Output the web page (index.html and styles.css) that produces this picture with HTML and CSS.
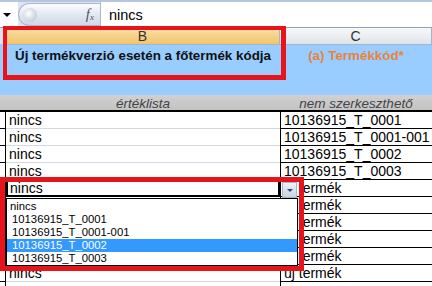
FILE: index.html
```html
<!DOCTYPE html>
<html lang="hu">
  <head>
    <meta charset="UTF-8" />
    <title>Termékkód</title>
    <link rel="stylesheet" href="styles.css">
  </head>
  <body>
    <div class="frame">
      <!-- Formula bar -->
      <div class="formula-bar">
        <div class="name-box"><span class="caret"></span></div>
        <div class="fx-pill"><span class="knob"></span><span class="fx">f<sub>x</sub></span></div>
        <div class="formula-input">nincs</div>
      </div>

      <!-- Sheet -->
      <div class="sheet">
        <div class="row col-heads">
          <div class="rh"></div>
          <div class="ch ch-sel">B</div>
          <div class="ch">C</div>
        </div>
        <div class="row title-row">
          <div class="rh blue"></div>
          <div class="title">Új termékverzió esetén a főtermék kódja</div>
          <div class="title orange">(a) Termékkód*</div>
        </div>
        <div class="row hint-row">
          <div class="rh gray"></div>
          <div class="hint">értéklista</div>
          <div class="hint">nem szerkeszthető</div>
        </div>
        <div class="data">
          <div class="row"><div class="rh"></div><div class="cb">nincs</div><div class="cc">10136915_T_0001</div></div>
          <div class="row"><div class="rh"></div><div class="cb">nincs</div><div class="cc">10136915_T_0001-001</div></div>
          <div class="row"><div class="rh"></div><div class="cb">nincs</div><div class="cc">10136915_T_0002</div></div>
          <div class="row"><div class="rh"></div><div class="cb">nincs</div><div class="cc">10136915_T_0003</div></div>
          <div class="row"><div class="rh"></div><div class="cb active">nincs</div><div class="cc">új termék</div></div>
          <div class="row"><div class="rh"></div><div class="cb"></div><div class="cc">új termék</div></div>
          <div class="row"><div class="rh"></div><div class="cb"></div><div class="cc">új termék</div></div>
          <div class="row"><div class="rh"></div><div class="cb"></div><div class="cc">új termék</div></div>
          <div class="row"><div class="rh"></div><div class="cb"></div><div class="cc">új termék</div></div>
          <div class="row"><div class="rh"></div><div class="cb">nincs</div><div class="cc">új termék</div></div>
          <div class="row"><div class="rh"></div><div class="cb"></div><div class="cc"></div></div>
        </div>
      </div>

      <!-- Validation dropdown -->
      <div class="dd-btn"><span class="dd-caret"></span></div>
      <ul class="dd-list">
        <li>nincs</li>
        <li>10136915_T_0001</li>
        <li>10136915_T_0001-001</li>
        <li class="sel">10136915_T_0002</li>
        <li>10136915_T_0003</li>
      </ul>

      <!-- Highlight boxes -->
      <div class="mark mark-head"></div>
      <div class="mark mark-list"></div>
    </div>
  </body>
</html>
```

FILE: styles.css
```css
/* ---------- Base ---------- */
*{box-sizing:border-box;margin:0;padding:0;}
html,body{width:432px;height:286px;overflow:hidden;background:#fff;}
body{font-family:"Liberation Sans",Arial,sans-serif;font-size:14px;color:#000;}
.frame{position:relative;width:432px;height:286px;overflow:hidden;}

/* ---------- Formula bar ---------- */
.formula-bar{display:flex;height:28px;background:#dbe5f3;border-top:2px solid #b6c6dc;border-bottom:1px solid #8da3c1;}
.name-box{flex:none;width:18px;display:flex;align-items:center;justify-content:center;background:#fff;}
.caret{width:0;height:0;border-left:4px solid transparent;border-right:4px solid transparent;border-top:4px solid #000;margin-left:-4px;}
.fx-pill{flex:none;width:82px;display:flex;align-items:center;justify-content:space-between;padding:0 6px 0 4px;margin:1px 0;border-radius:13px 0 0 13px;background:linear-gradient(#fbfcfe,#dde5f0 60%,#cfd9e6);border:1px solid #a9b8cc;border-right:none;}
.knob{width:14px;height:14px;border-radius:50%;background:radial-gradient(circle at 40% 40%,#fff,#c6cfdb 70%);}
.fx{font-family:"Liberation Serif",serif;font-style:italic;font-size:15px;color:#555;}
.fx sub{font-size:9px;vertical-align:-1px;}
.formula-input{flex:1;display:flex;align-items:center;padding-left:8px;background:#fff;border-left:1px solid #a9b8cc;font-size:14.5px;}

/* ---------- Sheet grid ---------- */
.row{display:grid;grid-template-columns:6px 274px 152px;}
.rh{background:#fff;border-right:1px solid #000;border-bottom:1px solid #000;}
.col-heads{height:16px;}
.col-heads .rh{background:#dde4ee;border-color:#9eb6ce;}
.ch{display:flex;align-items:center;justify-content:center;background:linear-gradient(#f7f8fa,#dfe4ea);border-right:1px solid #9eb6ce;border-bottom:1px solid #9eb6ce;color:#333;font-size:14px;}
.ch-sel{background:linear-gradient(#fbe0a8,#f3c36a);}
.title-row{height:51px;background:#99ccff;}
.title-row .rh.blue{background:#99ccff;border:none;}
.title{padding-top:4px;text-align:center;font-weight:bold;font-size:13.4px;color:#111;}
.orange{color:#e8843a;}
.hint-row{height:17px;background:linear-gradient(#d0d0d0,#c3c3c3);border-bottom:2px solid #000;}
.hint-row .rh.gray{background:transparent;border:none;}
.hint{text-align:center;font-style:italic;color:#444;font-size:13.5px;line-height:17px;}
.data .row{height:17px;}
.cb,.cc{padding:1px 0 0 3px;line-height:15px;white-space:nowrap;}
.cb{border-bottom:1px solid #d0d7e5;}
.cc{border-left:1px solid #000;border-bottom:1px solid #000;}
.cb.active{border:2px solid #000;line-height:13px;padding:0 0 0 2px;}

/* ---------- Validation dropdown ---------- */
.dd-btn{position:absolute;left:282px;top:182px;width:15px;height:16px;display:flex;align-items:center;justify-content:center;background:linear-gradient(#eef2f8,#c9d3e1);border:1px solid #a6b4c8;}
.dd-caret{width:0;height:0;border-left:3px solid transparent;border-right:3px solid transparent;border-top:3px solid #2b4a7a;}
.dd-list{position:absolute;left:6px;top:198px;width:292px;height:68px;padding-top:1px;list-style:none;background:#fff;border:1px solid #000;font-family:"Liberation Sans",Tahoma,sans-serif;font-size:11.3px;}
.dd-list li{height:13px;line-height:13px;padding-left:5px;}
.dd-list li:first-child{padding-left:3px;}
.dd-list li.sel{background:#3399ff;color:#fff;}

/* ---------- Highlight boxes ---------- */
.mark{position:absolute;border:5px solid #e8141c;}
.mark-head{left:3px;top:26px;width:283px;height:54px;border-width:4px 5px 5px 4px;}
.mark-list{left:0;top:177px;width:304px;height:94px;}
```
